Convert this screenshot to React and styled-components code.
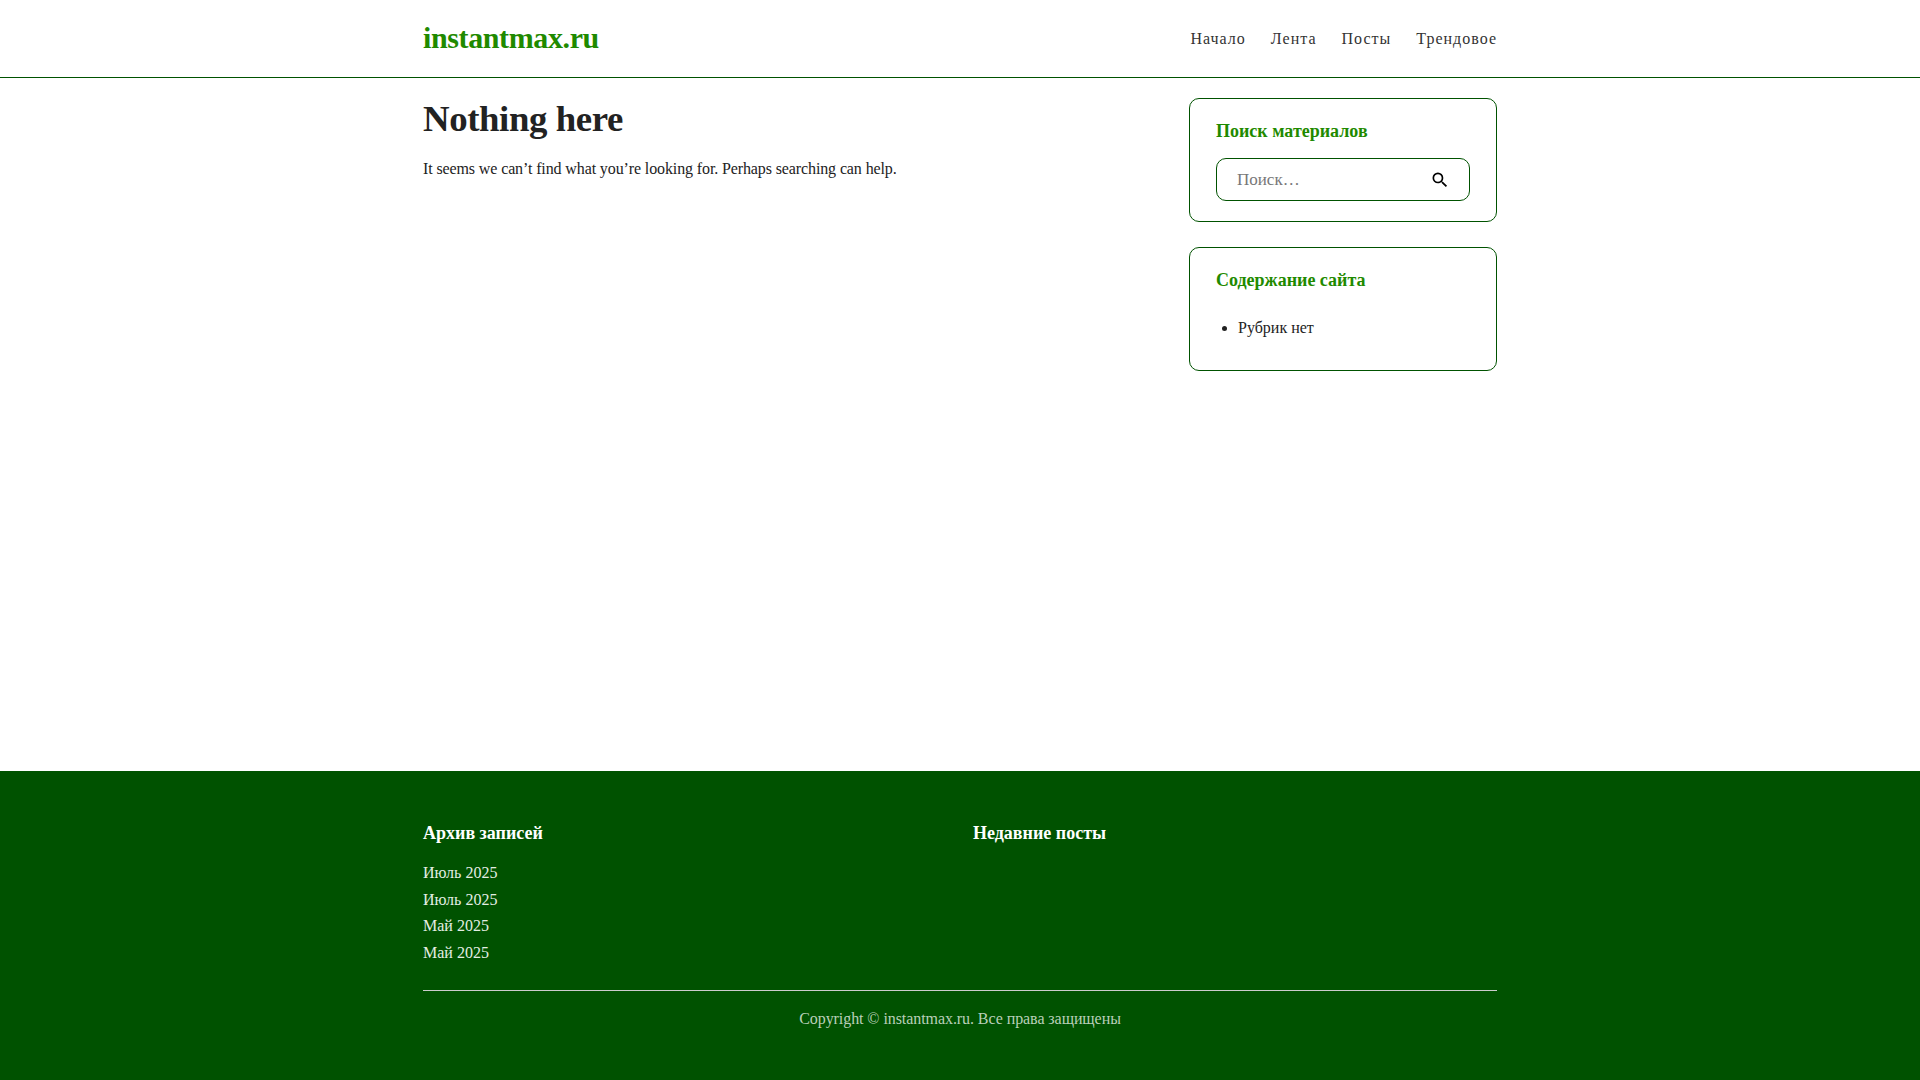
import React from "react";
import styled, { createGlobalStyle } from "styled-components";

const Global = createGlobalStyle`
  html, body { margin: 0; padding: 0; }
  body { font-family: "Liberation Serif", "Times New Roman", serif; font-size: 16px; color: #222; background: #fff; }
  * { box-sizing: border-box; }
`;

const Page = styled.div`
  min-height: 100vh;
  display: flex;
  flex-direction: column;
`;
const Container = styled.div`
  width: 1074px;
  margin: 0 auto;
`;
const Header = styled.header`
  border-bottom: 1px solid #005200;
  height: 78px;
`;
const HeaderRow = styled(Container)`
  height: 77px;
  display: flex;
  align-items: center;
  justify-content: space-between;
`;
const SiteTitle = styled.a`
  font-size: 30px;
  letter-spacing: -0.38px;
  font-weight: 700;
  color: #1f8a00;
  text-decoration: none;
  margin-top: -2px;
`;
const Nav = styled.nav`
  display: flex;
  gap: 25px;
`;
const NavLink = styled.a`
  font-size: 16px;
  letter-spacing: 1px;
  color: #333;
  text-decoration: none;
`;
const Main = styled(Container)`
  flex: 1;
  display: grid;
  grid-template-columns: 1fr 308px;
  column-gap: 40px;
  align-items: start;
  padding-top: 20px;
`;
const Title = styled.h1`
  font-size: 36.8px;
  letter-spacing: -0.4px;
  line-height: 42px;
  font-weight: 700;
  color: #222;
  margin: 0 0 15px;
`;
const Text = styled.p`
  font-size: 16px;
  letter-spacing: -0.115px;
  line-height: 27px;
  margin: 0;
  color: #222;
`;
const Sidebar = styled.aside`
  display: flex;
  flex-direction: column;
  gap: 25px;
`;
const Card = styled.section`
  border: 1px solid #005200;
  border-radius: 10px;
  padding: 19px 26px;
  height: 124px;
`;
const CardTitle = styled.h3`
  font-size: 18px;
  line-height: 26px;
  font-weight: 700;
  color: #1f8a00;
  margin: 0 0 14px;
`;
const SearchBox = styled.form`
  height: 43px;
  border: 1px solid #005200;
  border-radius: 10px;
  display: flex;
  align-items: center;
  justify-content: space-between;
  padding: 0 19px 0 20px;
`;
const SearchInput = styled.input`
  border: 0;
  outline: 0;
  flex: 1;
  min-width: 0;
  font: 17px "Liberation Serif", serif;
  color: #222;
  padding: 0;
  &::placeholder { color: #777; opacity: 1; }
`;
const SearchIcon = styled.svg`
  width: 20px;
  height: 20px;
  flex: none;
`;
const List = styled.ul`
  margin: 0;
  padding: 0 0 0 22px;
  font-size: 16px;
  line-height: 27px;
  padding-top: 7px;
  color: #222;
`;
const Footer = styled.footer`
  background: #005200;
  height: 309px;
  padding-top: 47px;
`;
const FooterCols = styled.div`
  display: grid;
  grid-template-columns: 1fr 1fr;
  column-gap: 26px;
  height: 173px;
  border-bottom: 1px solid #ccc;
`;
const FooterTitle = styled.h3`
  font-size: 18px;
  line-height: 30px;
  font-weight: 700;
  color: #fff;
  margin: 0 0 12px;
`;
const FooterLink = styled.a`
  display: block;
  font-size: 16px;
  line-height: 26.6px;
  color: #e4eee4;
  text-decoration: none;
`;
const Copy = styled.div`
  text-align: center;
  font-size: 16px;
  letter-spacing: -0.07px;
  line-height: 26px;
  margin-top: 15px;
  color: #b9cfb9;
`;

export default function App() {
  return (
    <Page>
      <Global />
      <Header>
        <HeaderRow>
          <SiteTitle href="#">instantmax.ru</SiteTitle>
          <Nav>
            {["Начало", "Лента", "Посты", "Трендовое"].map((n) => (
              <NavLink key={n} href="#">{n}</NavLink>
            ))}
          </Nav>
        </HeaderRow>
      </Header>
      <Main as="main">
        <div>
          <Title>Nothing here</Title>
          <Text>It seems we can’t find what you’re looking for. Perhaps searching can help.</Text>
        </div>
        <Sidebar>
          <Card>
            <CardTitle>Поиск материалов</CardTitle>
            <SearchBox>
              <SearchInput placeholder="Поиск…" />
              <SearchIcon viewBox="0 0 24 24" fill="#000">
                <path d="M15.5 14h-.79l-.28-.27A6.471 6.471 0 0 0 16 9.5 6.5 6.5 0 1 0 9.5 16c1.61 0 3.09-.59 4.23-1.57l.27.28v.79l5 4.99L20.49 19l-4.99-5zm-6 0C7.01 14 5 11.99 5 9.5S7.01 5 9.5 5 14 7.01 14 9.5 11.99 14 9.5 14z" />
              </SearchIcon>
            </SearchBox>
          </Card>
          <Card>
            <CardTitle>Содержание сайта</CardTitle>
            <List><li>Рубрик нет</li></List>
          </Card>
        </Sidebar>
      </Main>
      <Footer>
        <Container>
          <FooterCols>
            <div>
              <FooterTitle>Архив записей</FooterTitle>
              <FooterLink href="#">Июль 2025</FooterLink>
              <FooterLink href="#">Июль 2025</FooterLink>
              <FooterLink href="#">Май 2025</FooterLink>
              <FooterLink href="#">Май 2025</FooterLink>
            </div>
            <div>
              <FooterTitle>Недавние посты</FooterTitle>
            </div>
          </FooterCols>
          <Copy>Copyright © instantmax.ru. Все права защищены</Copy>
        </Container>
      </Footer>
    </Page>
  );
}
